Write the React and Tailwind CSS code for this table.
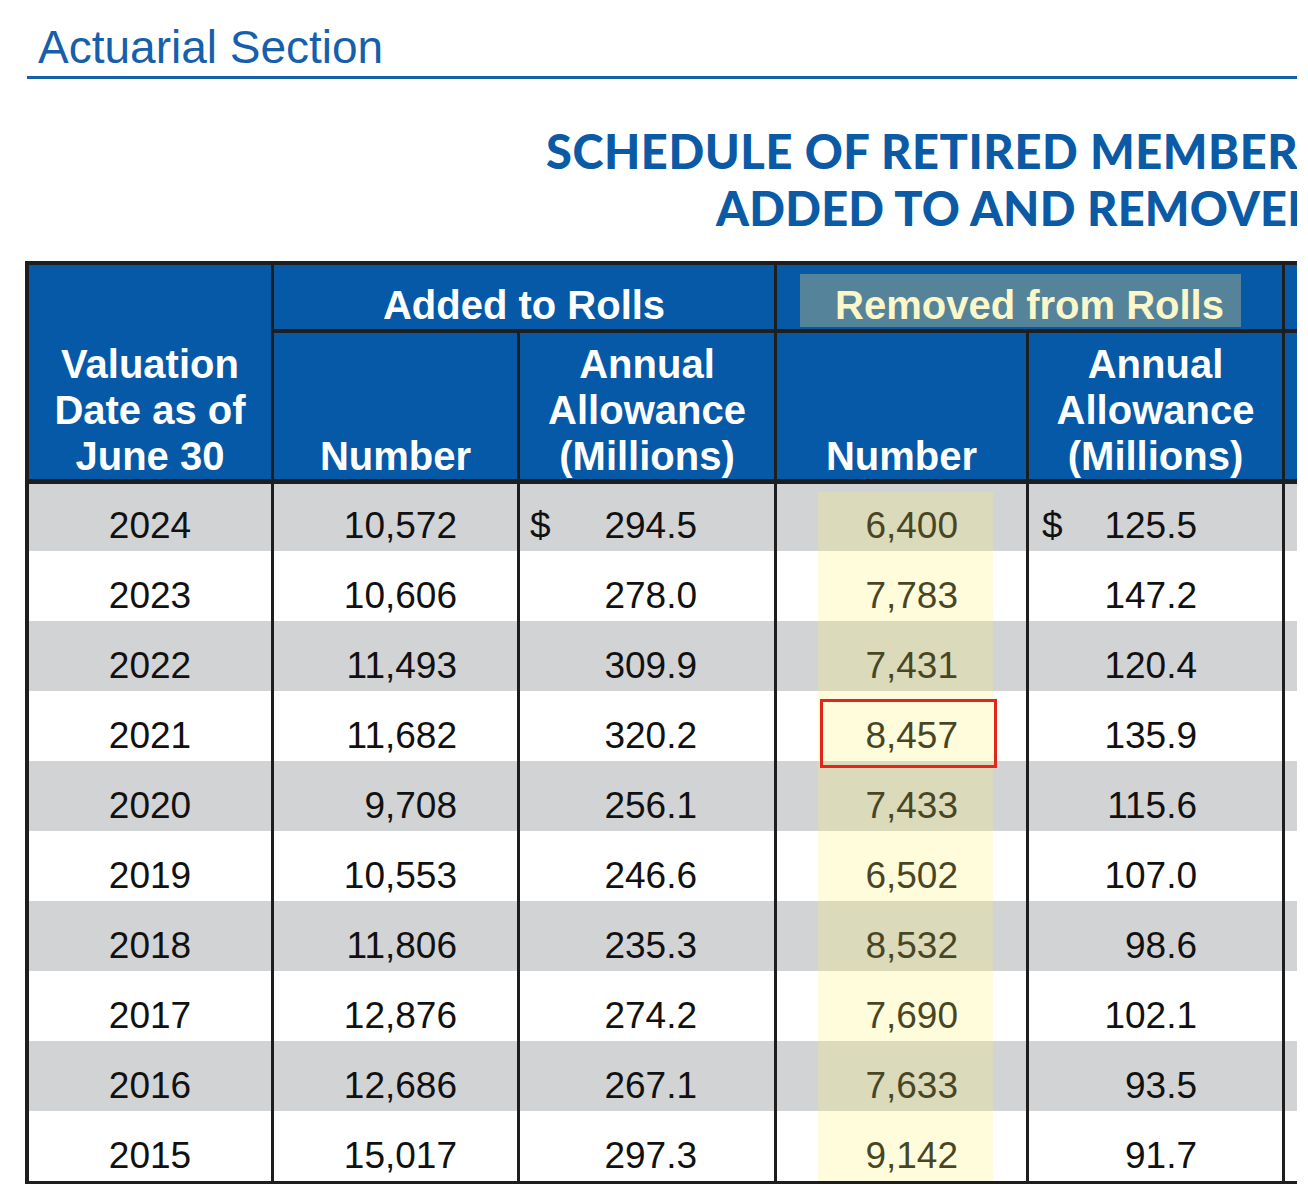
const rows = [
  ["2024", "10,572", "294.5", "6,400", "125.5"],
  ["2023", "10,606", "278.0", "7,783", "147.2"],
  ["2022", "11,493", "309.9", "7,431", "120.4"],
  ["2021", "11,682", "320.2", "8,457", "135.9"],
  ["2020", "9,708", "256.1", "7,433", "115.6"],
  ["2019", "10,553", "246.6", "6,502", "107.0"],
  ["2018", "11,806", "235.3", "8,532", "98.6"],
  ["2017", "12,876", "274.2", "7,690", "102.1"],
  ["2016", "12,686", "267.1", "7,633", "93.5"],
  ["2015", "15,017", "297.3", "9,142", "91.7"],
];

export default function App() {
  return (
    <div className="w-[1308px] h-[1198px] bg-white overflow-hidden">
      <div className="w-[1297px] h-full overflow-hidden font-['Liberation_Sans',Arial,sans-serif]">
        <div className="pl-[38px] pt-[24px] text-[46px] leading-none text-[#1660ab] whitespace-nowrap">
          Actuarial Section
        </div>
        <div className="ml-[27px] mt-[6px] h-[3px] bg-[#1660ab]" />
        <div className="mt-[49px] font-['Lato',sans-serif] font-black text-[47px] leading-none text-[#0b5aa6] whitespace-nowrap">
          <div className="pl-[546px] tracking-[0.55px]">SCHEDULE OF RETIRED MEMBERS</div>
          <div className="pl-[716px] mt-[10px] tracking-[0.2px]">ADDED TO AND REMOVED FROM ROLLS</div>
        </div>

        <div className="relative ml-[25px] mt-[29px] w-[1300px] border-t-[4px] border-l-[4px] border-b-[3px] border-[#1e1e1e]">
          {/* Header */}
          <div className="flex bg-[#0559a7] text-white font-bold text-[40px] border-b-[5px] border-[#1e1e1e]">
            <div className="w-[245px] shrink-0 h-[214px] border-r-[3px] border-[#1e1e1e] flex items-end justify-center text-center leading-[46px]">
              <div>
                Valuation
                <br />
                Date as of
                <br />
                June 30
              </div>
            </div>
            <div className="flex flex-col">
              <div className="flex h-[68px] border-b-[4px] border-[#1e1e1e]">
                <div className="w-[503px] shrink-0 border-r-[3px] border-[#1e1e1e] flex items-end justify-center pb-[4px] leading-none">
                  Added to Rolls
                </div>
                <div className="w-[508px] shrink-0 border-r-[3px] border-[#1e1e1e] relative flex items-end justify-center pb-[4px] leading-none">
                  <div className="absolute left-[23px] top-[9px] w-[441px] h-[53px] bg-[#55849a]" />
                  <span className="relative text-[#fcf7c8]">Removed from Rolls</span>
                </div>
                <div className="w-[250px] shrink-0" />
              </div>
              <div className="flex h-[146px] leading-[46px] text-center">
                <div className="w-[246px] shrink-0 border-r-[3px] border-[#1e1e1e] flex items-end justify-center">
                  Number
                </div>
                <div className="w-[257px] shrink-0 border-r-[3px] border-[#1e1e1e] flex items-end justify-center">
                  <div>
                    Annual
                    <br />
                    Allowance
                    <br />
                    (Millions)
                  </div>
                </div>
                <div className="w-[252px] shrink-0 border-r-[3px] border-[#1e1e1e] flex items-end justify-center">
                  Number
                </div>
                <div className="w-[256px] shrink-0 border-r-[3px] border-[#1e1e1e] flex items-end justify-center">
                  <div>
                    Annual
                    <br />
                    Allowance
                    <br />
                    (Millions)
                  </div>
                </div>
                <div className="w-[250px] shrink-0" />
              </div>
            </div>
          </div>

          {/* Body */}
          {rows.map((r, i) => (
            <div
              key={r[0]}
              className={`flex text-[37px] leading-none text-[#111] ${i % 2 === 0 ? "bg-[#d1d3d4]" : "bg-white"} ${i === 0 ? "h-[67px]" : "h-[70px]"}`}
            >
              <div className="w-[245px] shrink-0 border-r-[3px] border-[#1e1e1e] flex items-end justify-center pb-[7px]">
                {r[0]}
              </div>
              <div className="w-[246px] shrink-0 border-r-[3px] border-[#1e1e1e] flex items-end justify-end pb-[7px] pr-[60px]">
                {r[1]}
              </div>
              <div className="w-[257px] shrink-0 border-r-[3px] border-[#1e1e1e] flex items-end justify-between pb-[7px] pl-[10px] pr-[77px]">
                <span>{i === 0 ? "$" : ""}</span>
                <span>{r[2]}</span>
              </div>
              <div className="w-[252px] shrink-0 border-r-[3px] border-[#1e1e1e] flex items-end justify-end pb-[7px] pr-[68px]">
                {r[3]}
              </div>
              <div className="w-[256px] shrink-0 border-r-[3px] border-[#1e1e1e] flex items-end justify-between pb-[7px] pl-[13px] pr-[85px]">
                <span>{i === 0 ? "$" : ""}</span>
                <span>{r[4]}</span>
              </div>
              <div className="w-[250px] shrink-0" />
            </div>
          ))}

          {/* Highlight overlay on removed Number column */}
          <div className="absolute left-[789px] top-[227px] w-[175px] h-[689px] bg-[rgba(255,240,100,0.23)] pointer-events-none" />
          {/* Red box */}
          <div className="absolute left-[791px] top-[434px] w-[177px] h-[69px] border-[3px] border-[#e2261c] pointer-events-none" />
        </div>
      </div>
    </div>
  );
}
